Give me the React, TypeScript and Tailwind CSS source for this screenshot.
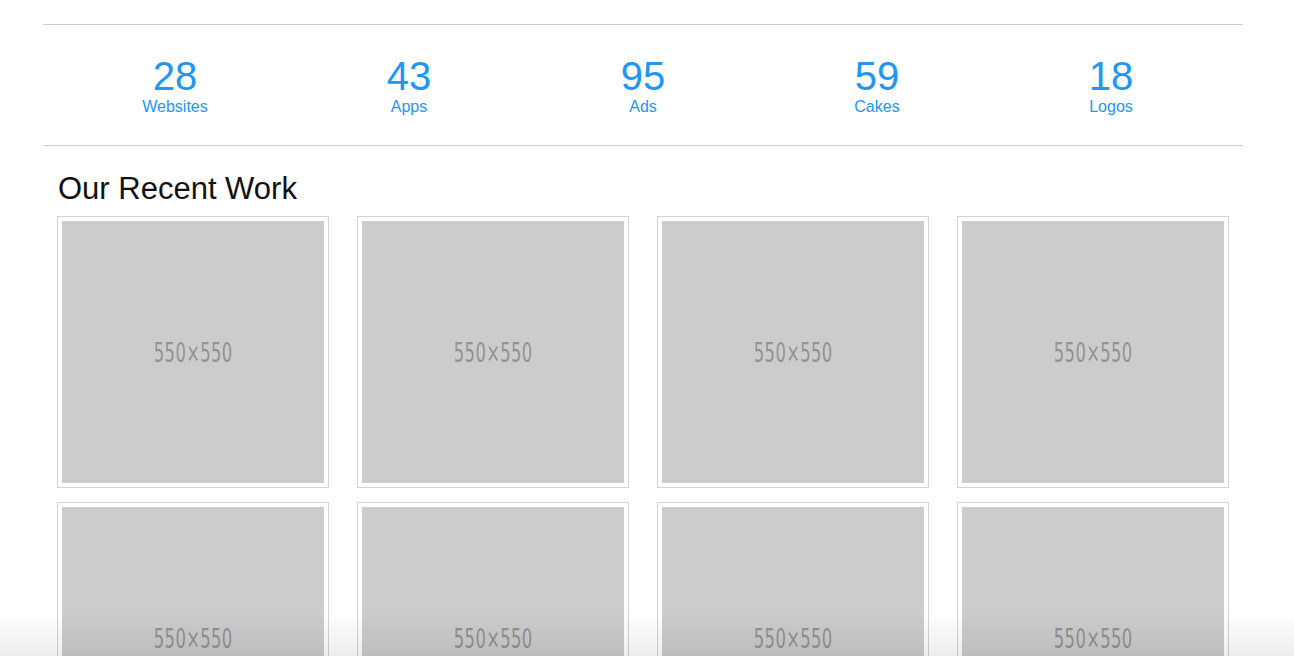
const stats = [
  { value: "28", label: "Websites" },
  { value: "43", label: "Apps" },
  { value: "95", label: "Ads" },
  { value: "59", label: "Cakes" },
  { value: "18", label: "Logos" },
];

const Thumb = () => (
  <div className="w-[272px] h-[272px] border border-[#d4d4d4] p-[4px] bg-white">
    <div className="w-full h-full bg-[#cccccc] flex items-center justify-center">
      <span
        className="text-[#939393] text-[26px] leading-none scale-x-[0.7] translate-y-[1px] tracking-[0.5px]"
        style={{ fontFamily: "'DejaVu Sans Condensed', 'DejaVu Sans', sans-serif" }}
      >
        550×550
      </span>
    </div>
  </div>
);

export default function App() {
  return (
    <div className="min-h-screen bg-white pt-[24px]" style={{ fontFamily: "'Liberation Sans', Arial, sans-serif" }}>
      <div className="ml-[43px] w-[1200px]">
        {/* Stats */}
        <div className="border-t border-b border-[#cfcfcf] pt-[31px] pb-[29px] px-[15px]">
          <div className="grid grid-cols-5 w-[1170px]">
            {stats.map((s) => (
              <div key={s.label} className="flex flex-col items-center text-[#2196f3]">
                <span className="text-[40px] leading-[40px]">{s.value}</span>
                <span className="text-[16px] leading-[18px] mt-[2px]">{s.label}</span>
              </div>
            ))}
          </div>
        </div>

        {/* Recent work */}
        <div className="px-[14px]">
          <h2 className="mt-[25px] ml-[1px] text-[31px] leading-[36px] text-[#111]">Our Recent Work</h2>
          <div className="mt-[9px] grid grid-cols-[repeat(4,272px)] gap-x-[28px] gap-y-[14px]">
            {Array.from({ length: 8 }).map((_, i) => (
              <Thumb key={i} />
            ))}
          </div>
        </div>
      </div>

      {/* bottom window shade */}
      <div className="pointer-events-none fixed bottom-0 left-0 right-0 h-[44px] bg-gradient-to-b from-transparent to-black/[0.07]" />
    </div>
  );
}
